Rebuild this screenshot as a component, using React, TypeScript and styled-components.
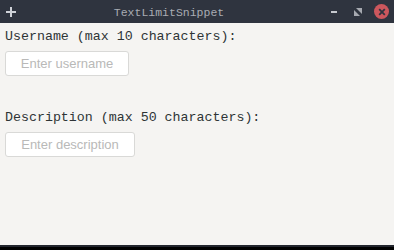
import React from 'react'
import styled, { createGlobalStyle } from 'styled-components'

const GlobalStyle = createGlobalStyle`
	html, body {
		margin: 0;
		padding: 0;
		background: #000;
	}
	body {
		width: 394px;
		height: 250px;
		overflow: hidden;
	}
`

type FieldType = {
	label: string
	placeholder: string
	width: number
}

const fields: FieldType[] = [
	{ label: 'Username (max 10 characters):', placeholder: 'Enter username', width: 124 },
	{ label: 'Description (max 50 characters):', placeholder: 'Enter description', width: 130 },
]

export default function App() {
	return (
		<>
			<GlobalStyle />
			<Window>
				<TitleBar>
					<PlusButton>
						<svg width="10" height="10" viewBox="0 0 10 10">
							<rect x="4" y="0" width="2" height="10" fill="#cfd2d8" />
							<rect x="0" y="4" width="10" height="2" fill="#cfd2d8" />
						</svg>
					</PlusButton>
					<Title>TextLimitSnippet</Title>
					<Controls>
						<ControlButton>
							<svg width="8" height="8" viewBox="0 0 8 8">
								<rect x="1" y="3" width="6" height="2" fill="#c7cad0" />
							</svg>
						</ControlButton>
						<ControlButton>
							<svg width="8" height="8" viewBox="0 0 8 8">
								<polygon points="2,0 8,0 8,6" fill="#a6a9b0" />
								<polygon points="0,2 0,8 6,8" fill="#a6a9b0" />
							</svg>
						</ControlButton>
						<CloseButton>
							<svg width="8" height="8" viewBox="0 0 8 8">
								<path d="M1.2 1.2 L6.8 6.8 M6.8 1.2 L1.2 6.8" stroke="#2f343f" strokeWidth="1.8" />
							</svg>
						</CloseButton>
					</Controls>
				</TitleBar>
				<Content>
					{fields.map(field => (
						<Field key={field.label}>
							<Label>{field.label}</Label>
							<Input placeholder={field.placeholder} style={{ width: field.width }} />
						</Field>
					))}
				</Content>
				<BottomEdge />
			</Window>
		</>
	)
}

const Window = styled.div`
	width: 394px;
	height: 250px;
	display: flex;
	flex-direction: column;
	background: #000;
`

const TitleBar = styled.div`
	height: 23px;
	flex: none;
	background: #2f343f;
	display: grid;
	grid-template-columns: 60px 1fr 70px;
	align-items: center;
`

const PlusButton = styled.div`
	display: flex;
	align-items: center;
	padding-left: 6px;
	padding-top: 1px;
`

const Title = styled.div`
	text-align: center;
	font-family: 'Liberation Mono', monospace;
	font-size: 11.5px;
	color: #a9acb3;
	padding-right: 46px;
	padding-top: 1px;
`

const Controls = styled.div`
	display: flex;
	align-items: center;
	justify-content: flex-end;
	gap: 8px;
	padding-right: 4px;
`

const ControlButton = styled.div`
	width: 16px;
	height: 16px;
	display: flex;
	align-items: center;
	justify-content: center;
`

const CloseButton = styled(ControlButton)`
	width: 15px;
	height: 15px;
	margin-right: 1px;
	border-radius: 50%;
	background: #cc575d;
`

const Content = styled.div`
	flex: 1;
	background: #f5f4f2;
	padding: 6px 5px 0;
	display: flex;
	flex-direction: column;
	gap: 34px;
`

const Field = styled.div`
	display: flex;
	flex-direction: column;
	align-items: flex-start;
	gap: 6px;
`

const Label = styled.div`
	font-family: 'Liberation Mono', monospace;
	font-size: 13.3px;
	line-height: 16px;
	color: #2e3436;
`

const Input = styled.input`
	box-sizing: border-box;
	height: 25px;
	border: 1px solid #d9d9d7;
	border-radius: 3px;
	background: #ffffff;
	padding: 0 8px;
	font-family: 'Liberation Sans', Arial, sans-serif;
	font-size: 13px;
	text-align: center;
	outline: none;
	&::placeholder {
		color: #b9b9b8;
	}
`

const BottomEdge = styled.div`
	height: 5px;
	flex: none;
	border-top: 2px solid #22252d;
	box-sizing: border-box;
	background: #000;
`
